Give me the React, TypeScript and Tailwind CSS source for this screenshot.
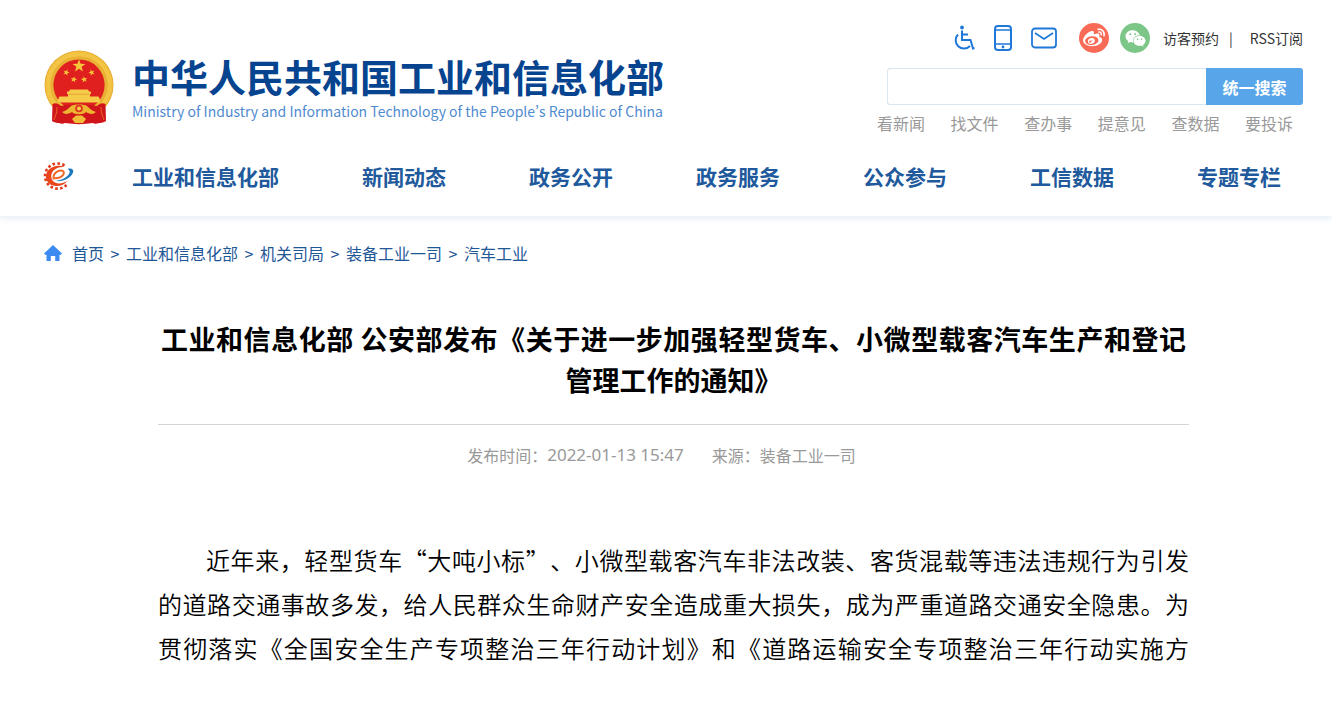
import React from "react";
import { FaWeibo, FaWeixin } from "react-icons/fa";

const navItems = ["工业和信息化部", "新闻动态", "政务公开", "政务服务", "公众参与", "工信数据", "专题专栏"];
const quickLinks = ["看新闻", "找文件", "查办事", "提意见", "查数据", "要投诉"];
const crumbs = ["首页", "工业和信息化部", "机关司局", "装备工业一司", "汽车工业"];

function Star({ x, y, r, turn = 0 }: { x: number; y: number; r: number; turn?: number }) {
  return (
    <path
      transform={`translate(${x} ${y}) rotate(${turn}) scale(${r})`}
      fill="#f8c63a"
      d="M0-1 .235-.324.951-.309.38.124.588.809 0 .4-.588.809-.38.124-.951-.309-.235-.324Z"
    />
  );
}

function Emblem() {
  return (
    <svg viewBox="0 0 70 75" className="h-[75px] w-[70px] shrink-0" aria-hidden="true">
      <circle cx="35" cy="35" r="34.5" fill="#e3a62b" />
      <circle cx="35" cy="35" r="31" fill="none" stroke="#f3c545" strokeWidth="5" />
      <circle cx="35" cy="35" r="33" fill="none" stroke="#f0bd3c" strokeWidth="1.500" strokeDasharray="4 2" />
      <circle cx="35" cy="35" r="27" fill="none" stroke="#e9b136" strokeWidth="2.500" />
      <circle cx="35" cy="35" r="25.6" fill="#e0201f" />
      <Star x={35} y={16} r={6.8} />
      <Star x={22.3} y={22.5} r={3.4} turn={20} />
      <Star x={47.7} y={22.5} r={3.4} turn={-20} />
      <Star x={29.8} y={29.5} r={3.4} turn={10} />
      <Star x={40.2} y={29.5} r={3.4} turn={-10} />
      <path fill="#f6cb4a" d="M26 39.5h18l1 2h2v2.500h-1v2.500h8.500l1.500 3v3H14v-3l1.500-3H24v-2.500h-1v-2.500h2z" />
      <path stroke="#d98e1d" strokeWidth=".6" d="M25 44.300h20" />
      <path fill="#d0161b" d="M8.500 54C12 52 15 54 17 56c8-2 28-2 36 0 2-2 5-4 8.500-2l.5 17c-2 1.500-5 2-7 2-2 1-5 1-6 0-9 1.500-19 1.500-28 0-2 1-4 1-6 0-2 0-5-.5-7-2z" />
      <path fill="#eeb530" d="M18 62c4-1 6-3 9-6 2-2 14-2 16 0 3 3 5 5 9 6-3 3-7 2-10 0-2 3-12 3-14 0-3 2-7 3-10 0z" />
      <circle cx="35" cy="58.500" r="3.800" fill="#dc3520" />
      <circle cx="35" cy="58.500" r="2" fill="#f8cf50" />
      <path fill="#f1bd38" d="m28 69 4-3.500h6l4 3.500-3 4h-8z" />
      <path stroke="#ec6b28" strokeWidth="1" fill="none" d="M13 57c0 7-2 9-3 13M57 57c0 7 2 9 3 13" />
    </svg>
  );
}

function GearLogo() {
  return (
    <svg viewBox="0 0 33 28" className="h-7 w-[33px] shrink-0" aria-hidden="true">
      <path
        d="M23.500 3.500A12.600 12.600 0 1 0 25.500 23"
        fill="none"
        stroke="#e23b1c"
        strokeWidth="2.600"
        strokeDasharray="2.600 2.300"
      />
      <path
        fill="#e8451d"
        d="M24 5C18.500 2.500 11 3.500 7 8.500c-4 5.500-2 12 3.500 14.500 5.500 2.300 12 .8 16-4-4.500 2.500-9 3.200-12.500 1.500-4.500-2.500-5-8-1.500-12C15.500 5.500 19.500 4.500 24 5z"
      />
      <path
        d="M13 16.200c4.500.5 9.500-1.800 9.800-5.200.2-2.600-3-3.200-5.800-1.800-3 1.500-4.800 4.300-4.500 7.300"
        fill="none"
        stroke="#f26a26"
        strokeWidth="2"
        strokeLinecap="round"
      />
      <path fill="#1c79c0" d="M26.500 7c4.500-1.300 6.800.8 5.300 4C29.500 16 22.500 20 14.500 19c6.500-.8 12-3.800 13.800-7.500.9-2 .2-3.500-1.800-4.500z" />
    </svg>
  );
}

function WheelchairIcon() {
  return (
    <svg viewBox="0 0 24 28" className="h-7 w-6" fill="none" stroke="#1f78d8" strokeWidth="2" aria-hidden="true">
      <circle cx="11" cy="3.500" r="1.900" fill="#1f78d8" stroke="none" />
      <path d="M11 6.500v9.500h8.500l2.500 8.500 1.500-.5M11 10.500h6M7 10.500a8.200 8.200 0 1 0 12 11.500" />
    </svg>
  );
}

function PhoneIcon() {
  return (
    <svg viewBox="0 0 20 28" className="h-7 w-5" fill="none" stroke="#1f78d8" strokeWidth="2" aria-hidden="true">
      <rect x="2" y="2" width="16" height="24" rx="3" />
      <path d="M2 6h16M2 20h16" strokeWidth="1.500" />
      <circle cx="10" cy="23" r="1.400" fill="#1f78d8" stroke="none" />
    </svg>
  );
}

function MailIcon() {
  return (
    <svg viewBox="0 0 26 22" className="h-[22px] w-[26px]" fill="none" stroke="#1f78d8" strokeWidth="1.800" aria-hidden="true">
      <rect x="1" y="1.500" width="24" height="19" rx="3" />
      <path d="m4 6 9 6 9-6" />
    </svg>
  );
}

export default function App() {
  return (
    <div
      lang="zh-CN"
      className="min-h-screen bg-white font-['Noto_Sans_CJK_SC',sans-serif] text-[#1f5797] [text-spacing-trim:space-all]"
    >
      <header className="h-[217px] border-b border-[#edf3f8] pr-[29px] pl-11 shadow-[0_2px_6px_#e8f0f6]">
        <div className="flex justify-between">
          <a href="#" className="flex pt-[50px]">
            <Emblem />
            <span className="ml-[18px] block">
              <span className="block text-[38px] leading-[52px] font-bold whitespace-nowrap text-[#07448f]">
                中华人民共和国工业和信息化部
              </span>
              <span
                lang="en"
                className="block text-sm leading-[18px] whitespace-nowrap text-[#4f8bd0] [font-variant-east-asian:proportional-width]"
              >
                Ministry of Industry and Information Technology of the People’s Republic of China
              </span>
            </span>
          </a>
          <div className="flex flex-col items-end pt-[22px]">
            <div className="flex h-8 items-center text-sm text-[#333]">
              <a href="#" aria-label="无障碍"><WheelchairIcon /></a>
              <a href="#" aria-label="移动版" className="ml-[18px]"><PhoneIcon /></a>
              <a href="#" aria-label="邮箱" className="ml-[18px]"><MailIcon /></a>
              <a href="#" aria-label="微博" className="ml-[22px] flex size-[30px] items-center justify-center rounded-full bg-[#fa6b57] text-white">
                <FaWeibo size={22} />
              </a>
              <a href="#" aria-label="微信" className="ml-[11px] flex size-[30px] items-center justify-center rounded-full bg-[#7cc688] text-white">
                <FaWeixin size={21} />
              </a>
              <a href="#" className="ml-[13px]">访客预约</a>
              <span className="mr-[17px] ml-[10px]">|</span>
              <a href="#">RSS订阅</a>
            </div>
            <form className="mt-[14px] flex h-[37px] w-[416px]" onSubmit={(e) => e.preventDefault()}>
              <input
                type="text"
                aria-label="搜索"
                className="min-w-0 flex-1 rounded-l-[3px] border border-r-0 border-[#d9e6f2] px-3 text-base outline-none"
              />
              <button type="submit" className="w-[97px] rounded-r-[3px] bg-[#58a5ea] text-base font-bold text-white">
                统一搜索
              </button>
            </form>
            <div className="mt-[6px] mr-[10px] flex w-[416px] justify-between text-base leading-6 text-[#999]">
              {quickLinks.map((t) => (
                <a key={t} href="#">{t}</a>
              ))}
            </div>
          </div>
        </div>
        <nav className="mt-[23px] -ml-[3px] flex items-center pr-[22px]">
          <GearLogo />
          <div className="ml-[58px] flex flex-1 justify-between text-[21px] leading-[36px] font-bold text-[#20599c]">
            {navItems.map((t) => (
              <a key={t} href="#">{t}</a>
            ))}
          </div>
        </nav>
      </header>

      <nav aria-label="面包屑" className="flex items-center pt-6 pl-11 text-base leading-6">
        <svg viewBox="0 0 18 16" className="mr-[10px] h-4 w-[18px]" fill="#3d8bf0" aria-hidden="true">
          <path d="M9 0 0 8.500l1 1.200h1.500V16h4.300v-5h4.400v5h4.300V9.700H17l1-1.200z" />
        </svg>
        {crumbs.map((t, i) => (
          <React.Fragment key={t}>
            {i > 0 && <span className="w-[22px] text-center">&gt;</span>}
            <a href="#">{t}</a>
          </React.Fragment>
        ))}
      </nav>

      <article className="pt-[53px] pr-[143px] pb-8 pl-[158px]">
        <h1 className="px-[3px] text-justify text-[27px] leading-[41px] font-bold text-black [text-align-last:center]">
          工业和信息化部 公安部发布《关于进一步加强轻型货车、小微型载客汽车生产和登记管理工作的通知》
        </h1>
        <div className="mt-6 flex justify-center gap-7 border-t border-[#d5d5d5] pt-[18px] pr-[24px] text-base leading-6 text-[#999]">
          <span className="flex">
            发布时间：<time className="font-['Noto_Sans'] text-[17px]">2022-01-13 15:47</time>
          </span>
          <span>来源：装备工业一司</span>
        </div>
        <p className="mt-[71px] indent-[48px] text-justify text-2xl leading-[44px] font-[350] text-black [text-align-last:justify]">
          近年来，轻型货车“大吨小标”、小微型载客汽车非法改装、客货混载等违法违规行为引发的道路交通事故多发，给人民群众生命财产安全造成重大损失，成为严重道路交通安全隐患。为贯彻落实《全国安全生产专项整治三年行动计划》和《道路运输安全专项整治三年行动实施方
        </p>
      </article>
    </div>
  );
}
